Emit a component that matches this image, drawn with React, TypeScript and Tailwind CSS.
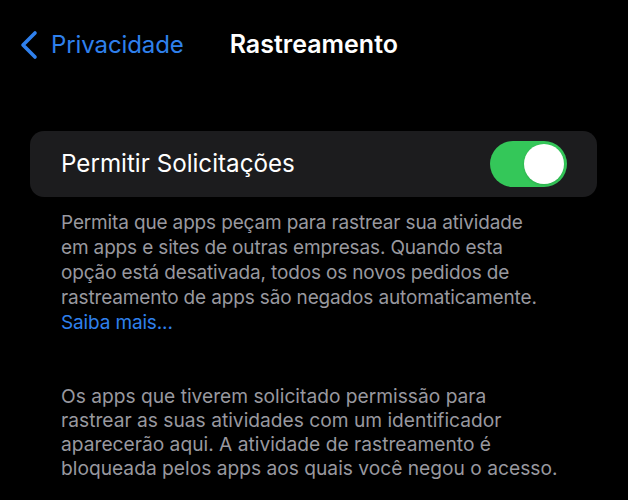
export default function App() {
  return (
    <div className="w-[628px] h-[500px] bg-black overflow-hidden font-['Inter',sans-serif]">
      <div className="flex items-center h-[90px] pl-[19px]">
        <div className="flex items-center gap-[12px] text-[#2f80ed]">
          <svg width="20" height="30" viewBox="0 0 20 30" fill="none">
            <path d="M16 3 L4 15 L16 27" stroke="#2f80ed" strokeWidth="3.6" strokeLinecap="round" strokeLinejoin="round" />
          </svg>
          <span className="text-[24px] tracking-[-0.1px]">Privacidade</span>
        </div>
        <span className="ml-[46px] text-[25px] font-semibold text-white">Rastreamento</span>
      </div>

      <div className="mt-[41px] mx-[30px] w-[567px] h-[66px] rounded-[14px] bg-[#1c1c1e] flex items-center justify-between pl-[31px] pr-[30px]">
        <span className="text-[24.2px] text-white">Permitir Solicitações</span>
        <div className="w-[77px] h-[46px] rounded-full bg-[#34c759] flex items-center justify-end pr-[3px]">
          <div className="w-[40px] h-[40px] rounded-full bg-white shadow" />
        </div>
      </div>

      <div className="pl-[61px] pr-[20px] pt-[13px] text-[19px] leading-[25px] text-[#98989f] whitespace-nowrap">
        <p className="tracking-[-0.15px]">
          Permita que apps peçam para rastrear sua atividade
          <br />
          em apps e sites de outras empresas. Quando esta
          <br />
          opção está desativada, todos os novos pedidos de
          <br />
          rastreamento de apps são negados automaticamente.
          <br />
          <span className="text-[#2f80ed]">Saiba mais...</span>
        </p>
        <p className="mt-[49px] leading-[24px] text-[19.2px]">
          Os apps que tiverem solicitado permissão para
          <br />
          rastrear as suas atividades com um identificador
          <br />
          aparecerão aqui. A atividade de rastreamento é
          <br />
          bloqueada pelos apps aos quais você negou o acesso.
        </p>
      </div>
    </div>
  );
}
